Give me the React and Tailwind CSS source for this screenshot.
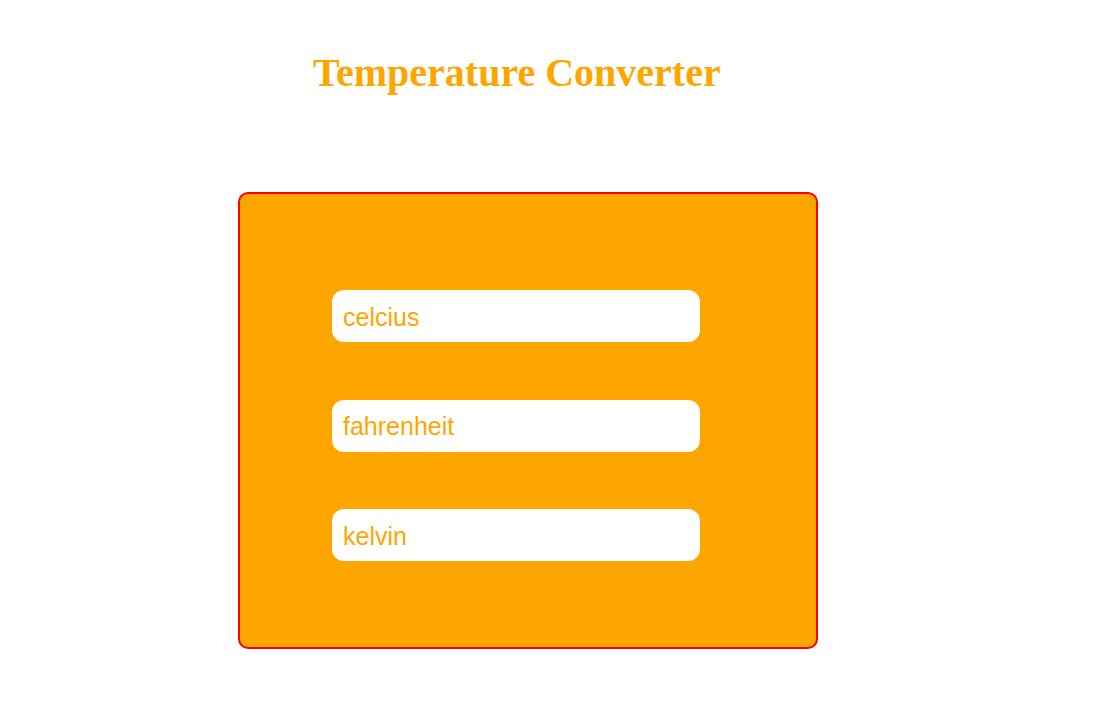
export default function App() {
  return (
    <div className="w-[1109px] h-[714px] bg-white">
      <div className="pt-[46px] pl-[313px]">
        <h1 className="text-[40px] leading-[54px] font-bold text-[#ffa500] font-['Liberation_Serif',serif]">
          Temperature Converter
        </h1>
      </div>
      <div className="mt-[92px] ml-[238px] w-[580px] h-[457px] bg-[#ffa500] border-2 border-[#ff0000] rounded-[10px] pt-[96px] pl-[92px] flex flex-col gap-[57.5px]">
        {["celcius", "fahrenheit", "kelvin"].map((p) => (
          <input
            key={p}
            placeholder={p}
            className="w-[368px] h-[52px] bg-white rounded-[12px] px-[11px] pt-[2px] text-[25px] outline-none placeholder:text-[#ffa500] font-['Liberation_Sans',sans-serif]"
          />
        ))}
      </div>
    </div>
  );
}
